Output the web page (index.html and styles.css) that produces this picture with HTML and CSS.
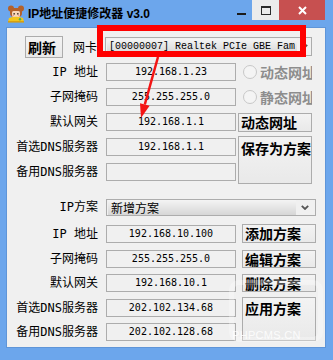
FILE: index.html
```html
<!DOCTYPE html>
<html lang="zh-CN">
  <head>
    <meta charset="UTF-8">
    <title>IP地址便捷修改器 v3.0</title>
    <link rel="stylesheet" href="styles.css">
  </head>
  <body>
    <div class="window">
      <div class="titlebar">
        <svg class="app-icon" width="18" height="18" viewBox="0 0 18 18">
          <circle cx="4" cy="3.5" r="3" fill="#b4612a"/>
          <circle cx="14" cy="3.5" r="3" fill="#b4612a"/>
          <rect x="3" y="3" width="12" height="9" rx="4" fill="#b4612a"/>
          <rect x="5" y="6" width="8" height="6" rx="1.5" fill="#f7d6b8"/>
          <rect x="6.5" y="8" width="1.3" height="1.6" fill="#3a2a20"/>
          <rect x="10.2" y="8" width="1.3" height="1.6" fill="#3a2a20"/>
          <rect x="5.5" y="10" width="1.5" height="1" fill="#f29a9a"/>
          <rect x="11" y="10" width="1.5" height="1" fill="#f29a9a"/>
          <path d="M2 13 Q9 10.5 16 13 L17 17 L1 17 Z" fill="#f2c51d"/>
          <rect x="1" y="16" width="16" height="1.6" fill="#d8a010"/>
          <circle cx="13" cy="14.3" r="1.2" fill="#4caf50"/>
        </svg>
        <span class="title">IP地址便捷修改器 v3.0</span>
        <div class="caption-btns">
          <div class="cap-btn cap-min"><span></span></div>
          <div class="cap-btn cap-max"><span></span></div>
          <div class="cap-btn cap-close">
            <svg width="9" height="9" viewBox="0 0 9 9"><path d="M1 1 L8 8 M8 1 L1 8" stroke="#fff" stroke-width="2"/></svg>
          </div>
        </div>
      </div>

      <div class="client">
        <div class="nic-row">
          <div class="btn refresh">刷新</div>
          <span class="nic-label">网卡</span>
          <div class="combo nic-combo">
            <span class="combo-text mono">[00000007] Realtek PCIe GBE Fam</span>
            <span class="combo-arrow"><svg width="8" height="5" viewBox="0 0 8 5"><polyline points="0.8,0.8 4,4 7.2,0.8" fill="none" stroke="#555" stroke-width="1.8"/></svg></span>
          </div>
        </div>

        <div class="grid current">
          <div class="label">IP 地址</div>
          <div class="field">192.168.1.23</div>
          <div class="radio"><i></i>动态网址</div>

          <div class="label">子网掩码</div>
          <div class="field">255.255.255.0</div>
          <div class="radio"><i></i>静态网址</div>

          <div class="label">默认网关</div>
          <div class="field">192.168.1.1</div>
          <div class="btn side-btn dyn-btn">动态网址</div>

          <div class="label">首选DNS服务器</div>
          <div class="field">192.168.1.1</div>
          <div class="btn side-btn save-btn">保存为方案</div>

          <div class="label">备用DNS服务器</div>
          <div class="field"></div>
        </div>

        <div class="scheme-row">
          <div class="label">IP方案</div>
          <div class="combo scheme-combo">
            <span class="combo-text">新增方案</span>
            <span class="combo-arrow"><svg width="8" height="5" viewBox="0 0 8 5"><polyline points="0.8,0.8 4,4 7.2,0.8" fill="none" stroke="#555" stroke-width="1.8"/></svg></span>
          </div>
        </div>

        <div class="grid scheme">
          <div class="label">IP 地址</div>
          <div class="field">192.168.10.100</div>
          <div class="btn scheme-btn add-btn">添加方案</div>

          <div class="label">子网掩码</div>
          <div class="field">255.255.255.0</div>
          <div class="btn scheme-btn">编辑方案</div>

          <div class="label">默认网关</div>
          <div class="field">192.168.10.1</div>
          <div class="btn scheme-btn">删除方案</div>

          <div class="label">首选DNS服务器</div>
          <div class="field">202.102.134.68</div>
          <div class="btn scheme-btn apply-btn">应用方案</div>

          <div class="label">备用DNS服务器</div>
          <div class="field">202.102.128.68</div>
        </div>

        <div class="watermark-box"></div>
        <div class="watermark">PHPCMS.CN</div>
      </div>

      <svg class="annot" width="333" height="360" viewBox="0 0 333 360">
        <rect x="100" y="28" width="203" height="26" fill="none" stroke="#ff0000" stroke-width="6"/>
        <line x1="158" y1="57" x2="144.8" y2="104.5" stroke="#f31414" stroke-width="2.5"/>
        <polygon points="141,118 149.6,105.8 140,103.2" fill="#f31414"/>
      </svg>
    </div>
  </body>
</html>
```

FILE: styles.css
```css
html, body {
  margin: 0;
  padding: 0;
}

body {
  background: #6ca6ec;
  font-family: "Noto Sans CJK SC", "Liberation Sans", sans-serif;
  color: #000;
}

.window {
  position: relative;
  width: 333px;
  height: 360px;
  display: flex;
  flex-direction: column;
  background: #6ca6ec;
  overflow: hidden;
}

/* title bar */
.titlebar {
  height: 28px;
  display: flex;
  align-items: flex-start;
  padding-left: 7px;
}

.app-icon {
  margin-top: 5px;
  flex: none;
}

.title {
  margin-left: 3px;
  margin-top: 6px;
  font-family: "Liberation Sans", "Noto Sans CJK SC", sans-serif;
  font-weight: bold;
  font-size: 12px;
  line-height: 16px;
  white-space: nowrap;
}

.caption-btns {
  margin-left: auto;
  margin-right: 8px;
  display: flex;
  height: 20px;
}

.cap-btn {
  height: 20px;
  display: flex;
  align-items: center;
  justify-content: center;
}

.cap-min {
  width: 22px;
}

.cap-min span {
  display: block;
  width: 9px;
  height: 2px;
  margin-top: 7px;
  background: #1b1b1b;
}

.cap-max {
  width: 27px;
  background: #ececec;
}

.cap-max span {
  display: block;
  width: 8px;
  height: 6px;
  border: 1px solid #2b2b2b;
  border-top-width: 2px;
  margin-top: 1px;
}

.cap-close {
  width: 46px;
  background: #c75050;
}

/* client area */
.client {
  position: relative;
  flex: 1;
  margin: 0 8px 13px 7px;
  background: #f0f0f0;
  box-shadow: 0 0 0 1px #5f95d8;
}

.nic-row {
  display: flex;
  align-items: flex-start;
  margin-top: 8px;
  height: 22px;
}

.btn {
  box-sizing: border-box;
  border: 1px solid #acacac;
  background: linear-gradient(#f3f3f3, #e9e9e9);
  font-weight: bold;
  font-size: 14px;
  line-height: 17px;
  padding-left: 2px;
  white-space: nowrap;
  overflow: hidden;
}

.refresh {
  margin-left: 18px;
  width: 38px;
  height: 22px;
  line-height: 20px;
}

.nic-label {
  margin-left: 10px;
  margin-top: 3px;
  font-size: 12px;
  line-height: 16px;
}

.combo {
  box-sizing: border-box;
  display: flex;
  border: 1px solid #acacac;
  background: #f0f0f0;
  padding: 1px;
}

.combo-text {
  flex: 1;
  min-width: 0;
  overflow: hidden;
  white-space: nowrap;
  padding-left: 3px;
  background: linear-gradient(#f4f4f4, #d6d6d6);
  font-size: 12px;
}

.combo-arrow {
  width: 18px;
  flex: none;
  display: flex;
  align-items: center;
  justify-content: center;
}

.mono {
  font-family: "Liberation Mono", monospace;
  font-size: 10px;
}

.nic-combo {
  margin-left: 8px;
  margin-top: 1px;
  width: 207px;
  height: 19px;
}

.nic-combo .combo-text {
  line-height: 15px;
  padding-left: 2px;
  padding-right: 1px;
}

.nic-combo .combo-arrow {
  width: 13px;
}

/* field grids */
.grid {
  display: grid;
  grid-template-columns: 99px 132px 74px;
  grid-auto-rows: 18px;
  row-gap: 7px;
}

.current {
  margin-top: 5px;
}

.label {
  box-sizing: border-box;
  padding-right: 8px;
  text-align: right;
  font-family: "DejaVu Sans Mono", "Noto Sans CJK SC", monospace;
  font-size: 12px;
  line-height: 18px;
  white-space: nowrap;
}

.field {
  box-sizing: border-box;
  width: 130px;
  height: 18px;
  border: 1px solid #acacac;
  text-align: center;
  font-family: "DejaVu Sans Mono", monospace;
  font-size: 10px;
  line-height: 16px;
}

.radio {
  display: flex;
  align-items: center;
  overflow: hidden;
  white-space: nowrap;
  font-weight: bold;
  font-size: 14px;
  color: #8d8d8d;
}

.radio i {
  flex: none;
  box-sizing: border-box;
  width: 14px;
  height: 14px;
  margin-left: 5px;
  margin-right: 3px;
  border: 1px solid #c8c8c8;
  border-radius: 50%;
  background: #f4f4f4;
}

.side-btn {
  width: 74px;
}

.dyn-btn {
  height: 19px;
}

.save-btn {
  grid-row: span 2;
  margin-top: -2px;
  margin-bottom: -3px;
  padding-top: 3px;
}

.scheme-row {
  display: grid;
  grid-template-columns: 99px 210px;
  margin-top: 18px;
  height: 17px;
}

.scheme-row .label {
  line-height: 17px;
}

.scheme-combo {
  height: 17px;
  padding: 0 1px;
}

.scheme-combo .combo-text {
  line-height: 15px;
}

.scheme {
  margin-top: 9px;
  row-gap: 6.5px;
}

.scheme-btn {
  width: 74px;
  margin-left: 4px;
}

.add-btn {
  margin-top: -1px;
}

.apply-btn {
  grid-row: span 2;
  margin-top: -1.5px;
  padding-top: 2px;
}

/* faint site watermark */
.watermark-box {
  position: absolute;
  left: 222px;
  top: 252px;
  width: 84px;
  height: 52px;
  border: 5px solid rgba(255, 255, 255, 0.3);
  border-radius: 10px;
}

.watermark {
  position: absolute;
  left: 225px;
  top: 301px;
  font-family: "Liberation Sans", sans-serif;
  font-size: 11px;
  letter-spacing: 0.3px;
  color: rgba(255, 255, 255, 0.85);
}

.annot {
  position: absolute;
  left: 0;
  top: 0;
  pointer-events: none;
}
```
